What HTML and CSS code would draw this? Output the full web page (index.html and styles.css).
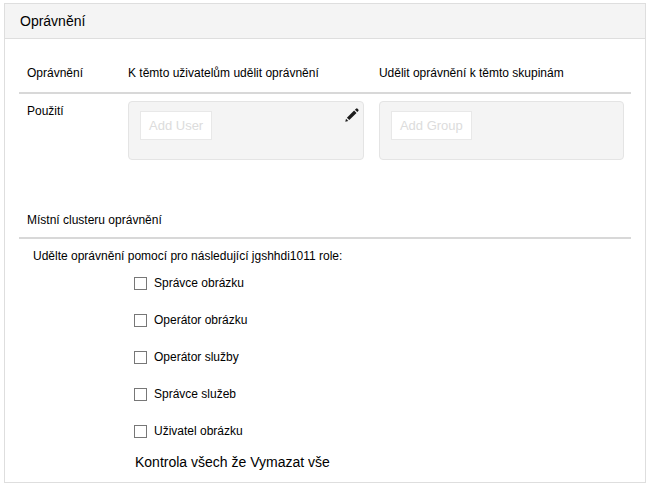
FILE: index.html
```html
<!DOCTYPE html>
<html lang="cs">
<head>
  <meta charset="utf-8">
  <title>Oprávnění</title>
  <link rel="stylesheet" href="styles.css">
</head>
<body>
  <main class="panel">
    <h1 class="panel-title">Oprávnění</h1>
    <div class="panel-body">
      <table class="permissions">
        <thead>
          <tr>
            <th class="col-name" scope="col">Oprávnění</th>
            <th class="col-users" scope="col">K těmto uživatelům udělit oprávnění</th>
            <th scope="col">Udělit oprávnění k těmto skupinám</th>
          </tr>
        </thead>
        <tbody>
          <tr>
            <th class="col-name" scope="row">Použití</th>
            <td class="col-users">
              <div class="picker">
                <button class="add" type="button">Add User</button>
                <button class="edit" type="button" aria-label="Upravit">
                  <svg width="14" height="14" viewBox="0 0 14 14" aria-hidden="true">
                    <path d="M0.3 13.7 1 10.7 3.3 13ZM1.9 9.7 9.1 2.5 11.5 4.9 4.3 12.1ZM9.9 1.7 11 0.7Q11.8 0 12.6 0.7L13.3 1.4Q14 2.2 13.3 3L12.3 4.1Z" fill="#1c1c1c"/>
                  </svg>
                </button>
              </div>
            </td>
            <td>
              <div class="picker">
                <button class="add" type="button">Add Group</button>
              </div>
            </td>
          </tr>
        </tbody>
      </table>

      <section class="cluster">
        <h2 class="section-title">Místní clusteru oprávnění</h2>
        <fieldset class="roles">
          <legend>Udělte oprávnění pomocí pro následující jgshhdi1011 role:</legend>
          <div class="role-list">
            <label><input type="checkbox">Správce obrázku</label>
            <label><input type="checkbox">Operátor obrázku</label>
            <label><input type="checkbox">Operátor služby</label>
            <label><input type="checkbox">Správce služeb</label>
            <label><input type="checkbox">Uživatel obrázku</label>
          </div>
        </fieldset>
        <p class="bulk"><button type="button">Kontrola všech</button> že <button type="button">Vymazat vše</button></p>
      </section>
    </div>
  </main>
</body>
</html>
```
FILE: styles.css
```css
* {
  box-sizing: border-box;
}

body {
  margin: 3px 4px;
  background: #fff;
  color: #000;
  font: 12px/16px "Liberation Sans", Arial, sans-serif;
}

button {
  padding: 0;
  border: 0;
  background: none;
  color: inherit;
  font: inherit;
  cursor: pointer;
}

.panel {
  border: 1px solid #dedede;
}

.panel-title {
  margin: 0;
  padding: 7px 15px;
  border-bottom: 1px solid #dedede;
  background: #f4f4f4;
  font-size: 14px;
  font-weight: normal;
  line-height: 20px;
}

.panel-body {
  padding: 26px 14px 10px;
}

.permissions {
  width: 100%;
  table-layout: fixed;
  border-collapse: separate;
  border-spacing: 0;
}

.permissions th,
.permissions td {
  padding: 0 7px 0 0;
  font-weight: normal;
  text-align: left;
  vertical-align: top;
}

.permissions thead th {
  padding-bottom: 11px;
  border-bottom: 2px solid #d8d8d8;
}

.permissions td {
  padding-top: 7px;
}

.permissions .col-name {
  width: 109px;
  padding-left: 8px;
}

.permissions .col-users {
  width: 41%;
  padding-right: 15px;
}

.permissions tbody .col-name {
  padding-top: 9px;
}

.picker {
  display: flex;
  justify-content: space-between;
  align-items: flex-start;
  min-height: 59px;
  padding: 9px 11px;
  border: 1px solid #e4e4e4;
  border-radius: 4px;
  background: #f4f4f4;
}

.add {
  padding: 5px 8px;
  border: 1px solid #e8e8e8;
  background: #fff;
  color: #dcdcdc;
  font-size: 13px;
  line-height: 17px;
}

.edit {
  display: flex;
  margin: -3px -7px 0 0;
}

.cluster {
  margin-top: 52px;
}

.section-title {
  margin: 0;
  padding: 0 8px 9px;
  border-bottom: 2px solid #d8d8d8;
  font-size: 12px;
  font-weight: normal;
}

.roles {
  margin: 0;
  padding: 0;
  border: 0;
}

.roles legend {
  padding: 9px 14px 11px;
}

.role-list {
  display: grid;
  gap: 21px;
  padding-left: 115px;
}

.role-list label {
  display: flex;
  align-items: center;
  gap: 7px;
  justify-self: start;
}

.role-list input {
  appearance: none;
  width: 13px;
  height: 13px;
  margin: 0;
  border: 1px solid #777;
  background: #fff;
}

.role-list input:checked {
  background: #444;
}

.bulk {
  margin: 13px 0 0 116px;
  font-size: 14px;
  line-height: 20px;
}
```
